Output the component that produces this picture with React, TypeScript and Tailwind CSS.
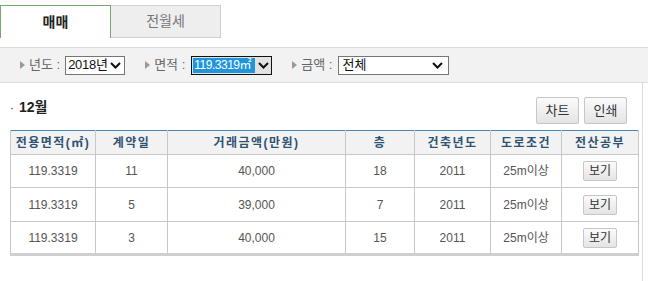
import React from 'react';

const rows = [
    { area: '119.3319', day: '11', price: '40,000', floor: '18', year: '2011', road: '25m이상' },
    { area: '119.3319', day: '5', price: '39,000', floor: '7', year: '2011', road: '25m이상' },
    { area: '119.3319', day: '3', price: '40,000', floor: '15', year: '2011', road: '25m이상' },
];

const headers = ['전용면적(㎡)', '계약일', '거래금액(만원)', '층', '건축년도', '도로조건', '전산공부'];
const widths = ['w-[85px]', 'w-[72px]', 'w-[178px]', 'w-[69px]', 'w-[76px]', 'w-[71px]', 'w-[77px]'];

function Chevron() {
    return (
        <svg width="11" height="7" viewBox="0 0 11 7" className="shrink-0">
            <path d="M1 1 L5.5 5.5 L10 1" fill="none" stroke="#111" strokeWidth="2" />
        </svg>
    );
}

function Arrow() {
    return (
        <svg width="5" height="8" viewBox="0 0 5 8" className="shrink-0">
            <path d="M0 0 L5 4 L0 8 Z" fill="#9a9a9a" />
        </svg>
    );
}

function FilterLabel({ children }: { children: React.ReactNode }) {
    return (
        <div className="flex items-center gap-[4px] shrink-0">
            <Arrow />
            <span className="text-[13px] text-[#666] whitespace-nowrap">{children}</span>
        </div>
    );
}

function SmallButton({ children, className = '' }: { children: React.ReactNode; className?: string }) {
    return (
        <button
            className={`flex items-center justify-center rounded-[2px] border border-[#c6c6c6] bg-gradient-to-b from-[#fbfbfb] to-[#e4e4e4] text-[#333] ${className}`}
        >
            {children}
        </button>
    );
}

export default function App() {
    return (
        <div
            className="w-[648px] h-[281px] bg-white flex flex-col overflow-hidden"
            style={{ fontFamily: '"Liberation Sans", "Noto Sans CJK KR", sans-serif' }}
        >
            {/* tabs */}
            <div className="flex pt-[5px]">
                <div className="w-[111px] h-[33px] border border-b-0 border-[#76a96f] bg-white flex items-center justify-center text-[14px] font-bold text-[#222]">
                    매매
                </div>
                <div className="w-[110px] h-[33px] border border-l-0 border-[#cfcfcf] bg-[#eeeeee] flex items-center justify-center text-[14px] text-[#777]">
                    전월세
                </div>
            </div>

            {/* filter bar */}
            <div className="mt-[9px] h-[36px] border-y border-[#dcdcdc] bg-[#f2f2f2] flex items-center gap-[20px] pl-[20px] whitespace-nowrap">
                <div className="flex items-center gap-[5px]">
                    <FilterLabel>년도 :</FilterLabel>
                    <div className="shrink-0 w-[60px] h-[19px] border border-[#767676] bg-white flex items-center justify-between pl-[2px] pr-[3px] text-[13px] text-[#111]">
                        <span className="tracking-[-0.3px]">2018년</span>
                        <Chevron />
                    </div>
                </div>
                <div className="flex items-center gap-[6px]">
                    <FilterLabel>면적 :</FilterLabel>
                    <div className="shrink-0 w-[81px] h-[19px] border border-[#111] bg-[#e2e2e2] flex items-stretch text-[12px]">
                        <span className="m-[1px] w-[62px] shrink-0 bg-[#1f95dc] text-white flex items-center pl-[1px] leading-none tracking-[-0.5px] overflow-hidden">
                            119.3319㎡
                        </span>
                        <span className="flex-1 flex items-center justify-center">
                            <Chevron />
                        </span>
                    </div>
                </div>
                <div className="flex items-center gap-[6px]">
                    <FilterLabel>금액 :</FilterLabel>
                    <div className="shrink-0 w-[111px] h-[19px] border border-[#767676] bg-white flex items-center justify-between pl-[3px] pr-[5px] text-[13px] text-[#111]">
                        <span>전체</span>
                        <Chevron />
                    </div>
                </div>
            </div>

            {/* content */}
            <div className="w-[643px] flex-1 border-r border-[#dcdcdc] pl-[10px]">
                <div className="flex items-start justify-between pt-[14px] pr-[15px]">
                    <div className="flex items-center gap-[5px]">
                        <span className="text-[12px] text-[#444] leading-none">·</span>
                        <span className="text-[14px] font-bold text-[#222]">12월</span>
                    </div>
                    <div className="flex gap-[5px]">
                        <SmallButton className="w-[43px] h-[27px] text-[13px]">차트</SmallButton>
                        <SmallButton className="w-[43px] h-[27px] text-[13px]">인쇄</SmallButton>
                    </div>
                </div>

                <table className="mt-[6px] w-[628px] border-collapse table-fixed border-t border-t-[#4685b5] border-b-[3px] border-b-[#cfcfcf]">
                    <thead>
                        <tr className="h-[24px] bg-[#f2f2f2]">
                            {headers.map((h, i) => (
                                <th
                                    key={h}
                                    className={`${widths[i]} border-x border-b border-[#c8c8c8] p-0 text-[12px] font-bold text-[#2f5272] tracking-[1.5px] text-center whitespace-nowrap`}
                                >
                                    {h}
                                </th>
                            ))}
                        </tr>
                    </thead>
                    <tbody>
                        {rows.map((r, i) => (
                            <tr key={i} className={i === 1 ? 'h-[34px]' : 'h-[33px]'}>
                                {[r.area, r.day, r.price, r.floor, r.year, r.road].map((v, j) => (
                                    <td
                                        key={j}
                                        className="border border-[#c8c8c8] p-0 text-center text-[12px] text-[#555] align-middle"
                                    >
                                        {v}
                                    </td>
                                ))}
                                <td className="border border-[#c8c8c8] p-0 text-center align-middle">
                                    <SmallButton className="mx-auto w-[34px] h-[20px] text-[12px] text-[#3d5a78]">보기</SmallButton>
                                </td>
                            </tr>
                        ))}
                    </tbody>
                </table>
            </div>
        </div>
    );
}
